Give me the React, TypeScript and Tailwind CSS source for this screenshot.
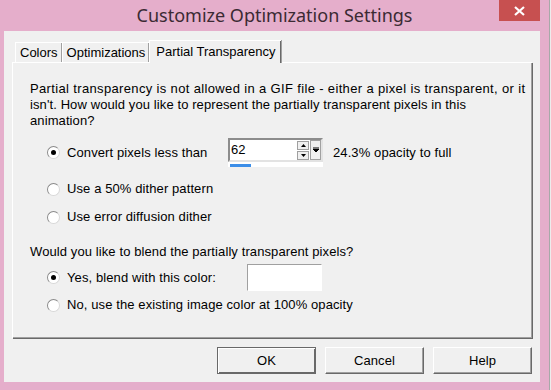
import React from "react";

const font = { fontFamily: '"Liberation Sans", Arial, sans-serif' };

function Radio({ checked }: { checked?: boolean }) {
  return (
    <span className="relative flex h-[13px] w-[13px] shrink-0 items-center justify-center rounded-full border border-[#8a8a8a] border-r-[#d8d8d8] border-b-[#d8d8d8] bg-white">
      {checked && <span className="h-[5px] w-[5px] rounded-full bg-black" />}
    </span>
  );
}

function Tab({ label, active }: { label: string; active?: boolean }) {
  if (active) {
    return (
      <div className="relative z-10 -mb-px flex h-[23px] items-center border-l border-t border-white pl-[6px] pr-[5px] tracking-normal shadow-[inset_-1px_0_0_#696969,1px_0_0_#a0a0a0] bg-[#f0f0f0]">
        {label}
      </div>
    );
  }
  return (
    <div className="flex h-[20px] items-center border-l border-t border-white px-[4px] tracking-normal shadow-[inset_-1px_0_0_#a0a0a0,1px_0_0_#696969]">
      {label}
    </div>
  );
}

function Button({ label, isDefault }: { label: string; isDefault?: boolean }) {
  return (
    <button
      className={
        "flex h-[27px] w-[99px] items-center justify-center bg-[#f0f0f0] text-[13px] text-black " +
        (isDefault
          ? "border border-[#696969] shadow-[inset_1px_1px_0_#ffffff,inset_-1px_-1px_0_#696969]"
          : "border border-white border-b-[#696969] border-r-[#696969] shadow-[inset_-1px_-1px_0_#a0a0a0]")
      }
    >
      {label}
    </button>
  );
}

export default function App() {
  return (
    <div
      style={font}
      className="relative flex h-[390px] w-[551px] overflow-hidden bg-[#e5aecb] text-[13px] tracking-[0.1px] text-black"
    >
      <div className="flex w-[549px] flex-col">
        {/* title bar */}
        <div className="relative flex h-[31px] items-center justify-center">
          <span
            className="text-[18px] tracking-normal text-[#3b2a33]"
            style={{ fontFamily: '"Noto Sans", "Open Sans", sans-serif' }}
          >
            Customize Optimization Settings
          </span>
          <div className="absolute right-[9px] top-0 flex h-[21px] w-[41px] items-center justify-center bg-[#c75050]">
            <svg width="11" height="10" viewBox="0 0 11 10">
              <path d="M1 1 L10 9 M10 1 L1 9" stroke="white" strokeWidth="2.2" />
            </svg>
          </div>
        </div>

        {/* client area */}
        <div className="ml-[4px] flex h-[351px] w-[536px] flex-col bg-[#f0f0f0] pl-[8px] pt-[9px]">
          <div className="flex items-end pl-[3px]">
            <Tab label="Colors" />
            <Tab label="Optimizations" />
            <Tab label="Partial Transparency" active />
          </div>

          {/* tab panel */}
          <div className="flex h-[276px] w-[520px] flex-col border-l border-t border-white pl-[17px] pt-[18px] shadow-[inset_-1px_-1px_0_#a0a0a0,1px_1px_0_#696969]">
            <p className="whitespace-nowrap leading-[16px]">
              <span className="tracking-[0.35px]">
                Partial transparency is not allowed in a GIF file - either a pixel is transparent, or it
              </span>
              <br />
              isn't. How would you like to represent the partially transparent pixels in this
              <br />
              animation?
            </p>

            <div className="ml-[17px] mt-[9px] flex h-[29px] items-center">
              <Radio checked />
              <span className="ml-[7px] w-[161px]">Convert pixels less than</span>
              <div className="flex h-[29px] w-[95px] flex-col bg-white">
                <div className="flex h-[24px] items-center border-2 border-[#8c8c8c] border-b-[#e3e3e3] border-r-[#e3e3e3] bg-white">
                  <span className="flex-1 pl-[1px]">62</span>
                  <div className="flex h-full w-[12px] flex-col justify-center gap-[1px]">
                    <div className="flex h-[9px] items-center justify-center border border-[#a0a0a0] bg-[#f0f0f0]">
                      <svg width="5" height="3" viewBox="0 0 5 3">
                        <path d="M2.5 0 L5 3 L0 3 Z" fill="black" />
                      </svg>
                    </div>
                    <div className="flex h-[9px] items-center justify-center border border-[#a0a0a0] bg-[#f0f0f0]">
                      <svg width="5" height="3" viewBox="0 0 5 3">
                        <path d="M0 0 L5 0 L2.5 3 Z" fill="black" />
                      </svg>
                    </div>
                  </div>
                  <div className="ml-[1px] flex h-full w-[11px] items-center justify-center border border-[#a0a0a0] bg-[#f0f0f0]">
                    <svg width="6" height="6" viewBox="0 0 6 6">
                      <path d="M0 0 L6 0 M0 2 L6 2 L3 5 Z" stroke="black" strokeWidth="1" fill="black" />
                    </svg>
                  </div>
                </div>
                <div className="mt-[2px] ml-[2px] h-[3px] w-[21px] bg-[#3c8ee8]" />
              </div>
              <span className="ml-[10px]">24.3% opacity to full</span>
            </div>

            <div className="ml-[17px] mt-[14px] flex h-[16px] items-center">
              <Radio />
              <span className="ml-[7px]">Use a 50% dither pattern</span>
            </div>

            <div className="ml-[17px] mt-[12px] flex h-[16px] items-center">
              <Radio />
              <span className="ml-[7px]">Use error diffusion dither</span>
            </div>

            <p className="mt-[19px] leading-[16px]">
              Would you like to blend the partially transparent pixels?
            </p>

            <div className="ml-[17px] mt-[4px] flex h-[27px] items-center">
              <Radio checked />
              <span className="ml-[7px] w-[180px]">Yes, blend with this color:</span>
              <div className="h-[27px] w-[75px] border border-[#a0a0a0] border-b-white border-r-white bg-white" />
            </div>

            <div className="ml-[17px] mt-[6px] flex h-[16px] items-center">
              <Radio />
              <span className="ml-[7px]">No, use the existing image color at 100% opacity</span>
            </div>
          </div>

          {/* buttons */}
          <div className="mt-[9px] flex w-[520px] justify-end gap-[9px]">
            <Button label="OK" isDefault />
            <Button label="Cancel" />
            <Button label="Help" />
          </div>
        </div>
      </div>
      <div className="h-full w-[2px] border-l border-[#a8a8a8] bg-[#ececec]" />
    </div>
  );
}
